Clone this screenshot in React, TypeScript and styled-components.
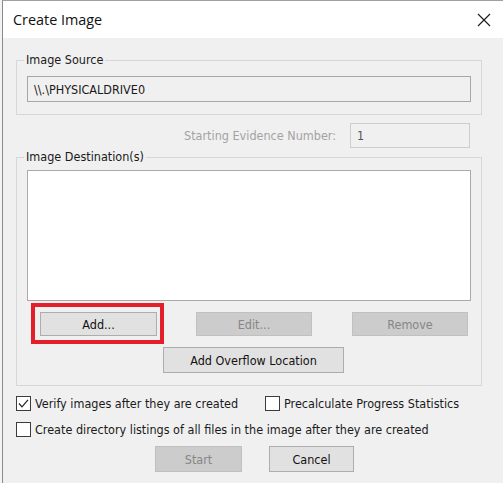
import React from "react";
import styled, { createGlobalStyle, css } from "styled-components";

const UI_FONT = `"DejaVu Sans Condensed", "DejaVu Sans", sans-serif`;

const GlobalStyle = createGlobalStyle`
  html, body {
    margin: 0;
    padding: 0;
    background: #f3f3f3;
  }
  * { box-sizing: border-box; }
`;

const Window = styled.div`
  margin-left: 2px;
  width: 501px;
  height: 483px;
  display: flex;
  flex-direction: column;
  border-left: 1px solid #8a8a8a;
  border-top: 1px solid #a0a0a0;
  background: #f0f0f0;
  overflow: hidden;
  font-family: ${UI_FONT};
  font-stretch: semi-condensed;
  font-size: 12.5px;
  color: #1a1a1a;
`;

const TitleBar = styled.div`
  height: 37px;
  flex: none;
  background: #ffffff;
  display: flex;
  align-items: center;
  justify-content: space-between;
  padding: 0 12px 0 10px;
`;

const Title = styled.span`
  font-family: "Open Sans", "Noto Sans", sans-serif;
  font-stretch: normal;
  font-size: 14.4px;
  color: #111;
  line-height: 20px;
  padding-top: 1px;
`;

const CloseButton = styled.span`
  width: 14px;
  height: 14px;
  display: flex;
`;

const Body = styled.div`
  flex: 1;
  display: flex;
  flex-direction: column;
  padding: 15px 21px 0 13px;
`;

const Group = styled.fieldset<{ $top?: number; $padTop: number }>`
  margin: ${(p) => p.$top ?? 0}px 0 0 0;
  padding: ${(p) => p.$padTop}px 10px 12px 10px;
  border: 1px solid #d7d7d7;
  min-width: 0;
  display: flex;
  flex-direction: column;
`;

const Legend = styled.legend`
  padding: 0 2px;
  margin-left: -3px;
  line-height: 14px;
  font-size: 12.5px;
  color: #1a1a1a;
`;

const TextField = styled.div<{ $disabled?: boolean; $width?: number; $height: number }>`
  height: ${(p) => p.$height}px;
  ${(p) =>
    p.$width
      ? css`
          width: ${p.$width}px;
        `
      : ""}
  display: flex;
  align-items: center;
  padding-left: 6px;
  background: #f0f0f0;
  border: 1px solid ${(p) => (p.$disabled ? "#cdcdcd" : "#a7a7a7")};
  color: ${(p) => (p.$disabled ? "#555" : "#1a1a1a")};
  white-space: nowrap;
`;

const EvidenceRow = styled.div`
  margin-top: 8px;
  display: flex;
  justify-content: flex-end;
  align-items: center;
  gap: 14px;
  padding-right: 12px;
`;

const DisabledLabel = styled.span`
  color: #a3a3a3;
`;

const ListBox = styled.div`
  height: 131px;
  background: #ffffff;
  border: 1px solid #a9a9a9;
`;

const ButtonRow = styled.div<{ $top: number; $left: number; $gap: number }>`
  display: flex;
  margin-top: ${(p) => p.$top}px;
  padding-left: ${(p) => p.$left}px;
  gap: ${(p) => p.$gap}px;
`;

const Button = styled.div<{ $width: number; $height: number; $disabled?: boolean; $highlight?: boolean }>`
  position: relative;
  width: ${(p) => p.$width}px;
  height: ${(p) => p.$height}px;
  display: flex;
  align-items: center;
  justify-content: center;
  background: ${(p) => (p.$disabled ? "#cccccc" : "#e1e1e1")};
  border: 1px solid ${(p) => (p.$disabled ? "#c0c0c0" : "#adadad")};
  color: ${(p) => (p.$disabled ? "#868686" : "#111")};
  white-space: nowrap;
  ${(p) =>
    p.$highlight &&
    css`
      &::after {
        content: "";
        position: absolute;
        top: -10px;
        left: -10px;
        right: -8px;
        bottom: -9px;
        border: 4px solid #e3202a;
        pointer-events: none;
      }
    `}
`;

const CheckRow = styled.div<{ $top: number }>`
  display: flex;
  align-items: center;
  margin-top: ${(p) => p.$top}px;
  height: 16px;
`;

const CheckItem = styled.label<{ $width?: number }>`
  display: flex;
  align-items: center;
  gap: 4px;
  ${(p) =>
    p.$width
      ? css`
          width: ${p.$width}px;
        `
      : ""}
  white-space: nowrap;
`;

const Box = styled.span`
  width: 15px;
  height: 15px;
  flex: none;
  border: 1px solid #3c3c3c;
  background: #ffffff;
  display: flex;
  align-items: center;
  justify-content: center;
`;

const CloseIcon = () => (
  <svg width="14" height="14" viewBox="0 0 14 14">
    <path d="M1 1 L13 13 M13 1 L1 13" stroke="#1f1f1f" strokeWidth="1.2" fill="none" />
  </svg>
);

const CheckMark = () => (
  <svg width="13" height="13" viewBox="0 0 13 13">
    <path d="M2 6.5 L5 9.8 L11 2.8" stroke="#222" strokeWidth="1.2" fill="none" />
  </svg>
);

const Check = ({ checked, label, width }: { checked?: boolean; label: string; width?: number }) => (
  <CheckItem $width={width}>
    <Box>{checked && <CheckMark />}</Box>
    <span>{label}</span>
  </CheckItem>
);

export default function App() {
  return (
    <>
      <GlobalStyle />
      <Window>
        <TitleBar>
          <Title>Create Image</Title>
          <CloseButton>
            <CloseIcon />
          </CloseButton>
        </TitleBar>
        <Body>
          <Group $padTop={9}>
            <Legend>Image Source</Legend>
            <TextField $height={26}>\\.\PHYSICALDRIVE0</TextField>
          </Group>

          <EvidenceRow>
            <DisabledLabel>Starting Evidence Number:</DisabledLabel>
            <TextField $disabled $width={120} $height={25}>
              1
            </TextField>
          </EvidenceRow>

          <Group $top={2} $padTop={6}>
            <Legend>Image Destination(s)</Legend>
            <ListBox />
            <ButtonRow $top={11} $left={13} $gap={39}>
              <Button $width={117} $height={24} $highlight>
                Add...
              </Button>
              <Button $width={116} $height={24} $disabled>
                Edit...
              </Button>
              <Button $width={116} $height={24} $disabled style={{ marginLeft: 1 }}>
                Remove
              </Button>
            </ButtonRow>
            <ButtonRow $top={11} $left={136} $gap={0}>
              <Button $width={181} $height={26}>
                Add Overflow Location
              </Button>
            </ButtonRow>
          </Group>

          <CheckRow $top={9}>
            <Check checked label="Verify images after they are created" width={249} />
            <Check label="Precalculate Progress Statistics" />
          </CheckRow>
          <CheckRow $top={10}>
            <Check label="Create directory listings of all files in the image after they are created" />
          </CheckRow>

          <ButtonRow $top={9} $left={139} $gap={27}>
            <Button $width={87} $height={26} $disabled>
              Start
            </Button>
            <Button $width={85} $height={26}>
              Cancel
            </Button>
          </ButtonRow>
        </Body>
      </Window>
    </>
  );
}
